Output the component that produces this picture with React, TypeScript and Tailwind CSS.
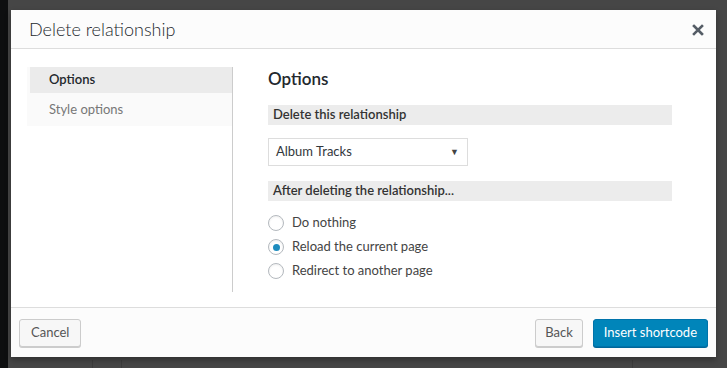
import React, { useState } from "react";

const font = { fontFamily: "Lato, 'Noto Sans', sans-serif" };

function Radio({ label, checked, onClick }: { label: string; checked: boolean; onClick: () => void }) {
  return (
    <label className="flex items-center h-6 cursor-pointer" onClick={onClick}>
      <span className="w-4 h-4 rounded-full border border-[#b4b9be] bg-white flex items-center justify-center shadow-[inset_0_1px_2px_rgba(0,0,0,0.07)]">
        {checked && <span className="w-[7px] h-[7px] rounded-full bg-[#1e8cbe]" />}
      </span>
      <span className="ml-2 text-[13px] text-[#444]">{label}</span>
    </label>
  );
}

export default function App() {
  const [choice, setChoice] = useState(1);
  const choices = ["Do nothing", "Reload the current page", "Redirect to another page"];

  return (
    <div className="relative w-[727px] h-[368px] overflow-hidden bg-[#464646]" style={font}>
      {/* page behind the modal */}
      <div className="absolute left-0 top-0 w-2 h-full bg-[#0e0f10]" />
      <div className="absolute left-[92px] top-[360px] w-px h-2 bg-[#3c3c3c]" />
      <div className="absolute left-[121px] top-[360px] w-px h-2 bg-[#3c3c3c]" />
      <div className="absolute left-[632px] top-[360px] w-px h-2 bg-[#3c3c3c]" />

      {/* modal */}
      <div className="absolute left-[11px] top-[10px] w-[705px] h-[347px] bg-white flex flex-col shadow-[0_3px_6px_rgba(0,0,0,0.3)]">
        <div className="h-[39px] shrink-0 bg-[#fcfcfc] border-b border-[#dddddd] flex items-center justify-between pl-[18px] pr-[12px]">
          <h1 className="text-[18px] font-light text-[#23282d]">Delete relationship</h1>
          <svg width="12" height="12" viewBox="0 0 12 12" className="mt-px">
            <path d="M2 2 L10 10 M10 2 L2 10" stroke="#555d66" strokeWidth="2.6" strokeLinecap="square" />
          </svg>
        </div>

        <div className="flex-1 flex pt-[18px] pl-[16px]">
          <div className="w-[206px] shrink-0 border-r border-[#cccccc] mb-[15px]">
            <div className="bg-[#fafafa]">
              <div className="h-[26px] ml-[3px] bg-[#ebebeb] flex items-center pl-[19px] text-[13px] font-semibold text-[#23282d]">
                Options
              </div>
              <div className="h-[33px] flex items-center pl-[22px] text-[13px] text-[#777]">Style options</div>
            </div>
          </div>

          <div className="flex-1 pl-[35px] pr-[44px]">
            <h2 className="text-[17px] font-semibold text-[#23282d] leading-[22px] mt-px">Options</h2>
            <div className="mt-[15px] h-5 bg-[#ececec] flex items-center pl-[5px] text-[13px] font-semibold text-[#333]">
              Delete this relationship
            </div>
            <div className="mt-[13px] w-[200px] h-[28px] border border-[#dddddd] bg-white flex items-center justify-between pl-[7px] pr-[8px] text-[13px] text-[#32373c]">
              <span>Album Tracks</span>
              <span className="text-[9px] text-[#444]">▼</span>
            </div>
            <div className="mt-[15px] h-5 bg-[#ececec] flex items-center pl-[5px] text-[13px] font-semibold text-[#333]">
              After deleting the relationship...
            </div>
            <div className="mt-[10px] flex flex-col">
              {choices.map((c, i) => (
                <Radio key={c} label={c} checked={choice === i} onClick={() => setChoice(i)} />
              ))}
            </div>
          </div>
        </div>

        <div className="h-[50px] shrink-0 bg-[#fcfcfc] border-t border-[#dddddd] flex items-center justify-between px-[8px]">
          <button className="h-[28px] px-[11px] rounded-[3px] border border-[#cccccc] bg-[#f7f7f7] shadow-[0_1px_0_#cccccc] text-[13px] text-[#555]">
            Cancel
          </button>
          <div className="flex gap-[10px]">
            <button className="h-[28px] px-[9px] rounded-[3px] border border-[#cccccc] bg-[#f7f7f7] shadow-[0_1px_0_#cccccc] text-[13px] text-[#555]">
              Back
            </button>
            <button className="h-[28px] px-[10px] rounded-[3px] border border-[#0073aa] bg-[#0085ba] shadow-[0_1px_0_#006799] text-[13px] text-white">
              Insert shortcode
            </button>
          </div>
        </div>
      </div>
    </div>
  );
}
